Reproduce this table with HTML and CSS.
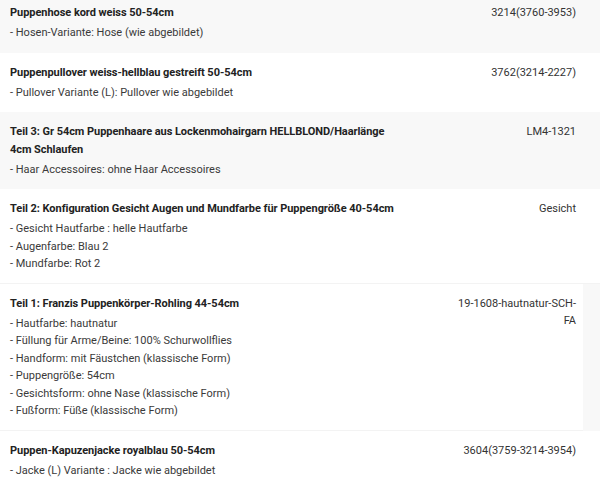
FILE: index.html
```html
<!DOCTYPE html>
<html lang="de">
<head>
<meta charset="utf-8">
<title>Bestellpositionen</title>
<link rel="stylesheet" href="styles.css">
</head>
<body>
<div class="list">
  <div class="row alt">
    <div class="name">
      <p class="title">Puppenhose kord weiss 50-54cm</p>
      <p class="opt">- Hosen-Variante: Hose (wie abgebildet)</p>
    </div>
    <div class="sku">3214(3760-3953)</div>
    <div class="edge"></div>
  </div>
  <div class="row">
    <div class="name">
      <p class="title">Puppenpullover weiss-hellblau gestreift 50-54cm</p>
      <p class="opt">- Pullover Variante (L): Pullover wie abgebildet</p>
    </div>
    <div class="sku">3762(3214-2227)</div>
    <div class="edge"></div>
  </div>
  <div class="row alt">
    <div class="name">
      <p class="title">Teil 3: Gr 54cm Puppenhaare aus Lockenmohairgarn HELLBLOND/Haarlänge 4cm Schlaufen</p>
      <p class="opt">- Haar Accessoires: ohne Haar Accessoires</p>
    </div>
    <div class="sku">LM4-1321</div>
    <div class="edge"></div>
  </div>
  <div class="row">
    <div class="name">
      <p class="title">Teil 2: Konfiguration Gesicht Augen und Mundfarbe für Puppengröße 40-54cm</p>
      <p class="opt">- Gesicht Hautfarbe : helle Hautfarbe</p>
      <p class="opt">- Augenfarbe: Blau 2</p>
      <p class="opt">- Mundfarbe: Rot 2</p>
    </div>
    <div class="sku">Gesicht</div>
    <div class="edge"></div>
  </div>
  <div class="row lined">
    <div class="name">
      <p class="title">Teil 1: Franzis Puppenkörper-Rohling 44-54cm</p>
      <p class="opt">- Hautfarbe: hautnatur</p>
      <p class="opt">- Füllung für Arme/Beine: 100% Schurwollflies</p>
      <p class="opt">- Handform: mit Fäustchen (klassische Form)</p>
      <p class="opt">- Puppengröße: 54cm</p>
      <p class="opt">- Gesichtsform: ohne Nase (klassische Form)</p>
      <p class="opt">- Fußform: Füße (klassische Form)</p>
    </div>
    <div class="sku">19-1608-hautnatur-SCH-FA</div>
    <div class="edge shade"></div>
  </div>
  <div class="row lined">
    <div class="name">
      <p class="title">Puppen-Kapuzenjacke royalblau 50-54cm</p>
      <p class="opt">- Jacke (L) Variante : Jacke wie abgebildet</p>
    </div>
    <div class="sku">3604(3759-3214-3954)</div>
    <div class="edge"></div>
  </div>
</div>
</body>
</html>
```

FILE: styles.css
```css
html, body {
  margin: 0;
  padding: 0;
  background: #ffffff;
}

body {
  font-family: Roboto, "Liberation Sans", Arial, sans-serif;
  font-size: 11px;
  color: #333333;
  overflow: hidden;
}

.list {
  margin-top: -7px;
}

.row {
  display: flex;
  align-items: stretch;
  background: #ffffff;
}

.row.alt {
  background: #f8f8f8;
}

.row.lined {
  border-top: 1px solid #f3f3f3;
  margin-top: -1px;
}

.name {
  width: 388px;
  padding: 11px 0 11px 10px;
}

.name p {
  margin: 0;
  line-height: 17.5px;
}

.title {
  font-weight: 700;
  color: #222222;
  letter-spacing: -0.05px;
  margin-bottom: 2.5px !important;
}

.opt {
  color: #3a3a3a;
}

.sku {
  margin-left: auto;
  width: 120px;
  padding: 11px 7px 11px 0;
  line-height: 17.5px;
  text-align: right;
  color: #333333;
}

.edge {
  width: 17px;
  flex: none;
}

.edge.shade {
  background: #f8f8f8;
}
```
